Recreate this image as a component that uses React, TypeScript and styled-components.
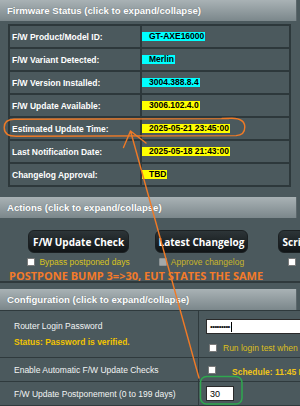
import React from "react";
import styled, { createGlobalStyle } from "styled-components";

const GlobalStyle = createGlobalStyle`
  html, body {
    margin: 0;
    padding: 0;
    background: #4b595d;
  }
  body {
    font-family: "Liberation Sans", Arial, sans-serif;
  }
`;

const STATUS_ROWS = [
  { label: "F/W Product/Model ID:", value: "GT-AXE16000", tone: "cyan" },
  { label: "F/W Variant Detected:", value: "Merlin", tone: "cyan" },
  { label: "F/W Version Installed:", value: "3004.388.8.4", tone: "cyan" },
  { label: "F/W Update Available:", value: "3006.102.4.0", tone: "yellow" },
  { label: "Estimated Update Time:", value: "2025-05-21 23:45:00", tone: "yellow" },
  { label: "Last Notification Date:", value: "2025-05-18 21:43:00", tone: "yellow" },
  { label: "Changelog Approval:", value: "TBD", tone: "yellow" },
];

const App: React.FC = () => {
  return (
    <>
      <GlobalStyle />
      <Page>
        <SectionHeader>Firmware Status (click to expand/collapse)</SectionHeader>
        <StatusGrid>
          {STATUS_ROWS.map((row) => (
            <React.Fragment key={row.label}>
              <StatusLabel>{row.label}</StatusLabel>
              <StatusValueCell>
                <Badge tone={row.tone}>{row.value}</Badge>
              </StatusValueCell>
            </React.Fragment>
          ))}
        </StatusGrid>

        <SectionHeader top={10}>Actions (click to expand/collapse)</SectionHeader>
        <ActionsBody>
          <ButtonsRow>
            <ActionCol width={101} gap={26}>
              <ActionButton>F/W Update Check</ActionButton>
              <CheckRow>
                <CheckBox />
                <CheckText>Bypass postponed days</CheckText>
              </CheckRow>
            </ActionCol>
            <ActionCol width={93} gap={30}>
              <ActionButton>Latest Changelog</ActionButton>
              <CheckRow>
                <CheckBox disabled />
                <CheckText muted>Approve changelog</CheckText>
              </CheckRow>
            </ActionCol>
            <ActionCol width={110} gap={0} start>
              <ActionButton>Script Update Check</ActionButton>
              <CheckRow indent={10}>
                <CheckBox />
                <CheckText green>Auto-update script</CheckText>
              </CheckRow>
            </ActionCol>
          </ButtonsRow>
          <OrangeNote>POSTPONE BUMP 3=&gt;30, EUT STATES THE SAME</OrangeNote>
        </ActionsBody>
        <Divider />

        <SectionHeader top={6}>Configuration (click to expand/collapse)</SectionHeader>
        <ConfigGrid>
          <ConfigLabel height={47}>
            <div>Router Login Password</div>
            <StatusNote>Status: Password is verified.</StatusNote>
          </ConfigLabel>
          <ConfigCell>
            <PasswordBox>
              •••••••••<Caret />
            </PasswordBox>
            <CheckRow indent={3} top={9}>
              <CheckBox />
              <ConfigText>Run login test when saving</ConfigText>
            </CheckRow>
          </ConfigCell>

          <ConfigLabel height={24}>Enable Automatic F/W Update Checks</ConfigLabel>
          <ConfigCell center>
            <CheckRow indent={2} top={0}>
              <CheckBox />
              <ScheduleText>Schedule: 11:45 PM daily</ScheduleText>
            </CheckRow>
          </ConfigCell>

          <ConfigLabel height={24}>F/W Update Postponement (0 to 199 days)</ConfigLabel>
          <ConfigCell center>
            <NumberBox>30</NumberBox>
          </ConfigCell>
        </ConfigGrid>

        <Annotations viewBox="0 0 300 406" width={300} height={406}>
          <path
            d="M 229 118.6 L 14 119.2 C 7 119.4 4.2 122 4.2 127.4 C 4.2 133.2 8 136.2 16 136.2 L 236 135.6 C 242.5 135.4 244.8 132 244.8 127 C 244.8 121.4 241 118.4 232 118.2 L 222 118.4"
            fill="none"
            stroke="#f07a26"
            strokeWidth={1.4}
            strokeLinecap="round"
          />
          <path
            d="M 199 378 L 130.5 131 M 130.5 131 L 123.5 147.5 M 130.5 131 L 146 143"
            fill="none"
            stroke="#f07a26"
            strokeWidth={1.4}
            strokeLinecap="round"
          />
          <rect
            x={200.5}
            y={376.5}
            width={41.5}
            height={27.5}
            rx={6}
            fill="none"
            stroke="#2fa84f"
            strokeWidth={1.5}
          />
        </Annotations>
      </Page>
    </>
  );
};

export default App;

const Page = styled.div`
  position: relative;
  width: 300px;
  height: 406px;
  overflow: hidden;
  background: #4b595d;
`;

const SectionHeader = styled.div<{ top?: number }>`
  box-sizing: border-box;
  width: 297px;
  height: 21px;
  margin-top: ${(props) => props.top ?? 0}px;
  padding-left: 7px;
  display: flex;
  align-items: center;
  background: linear-gradient(#a9b2b5, #7b878b);
  border-right: 1px solid #5b676b;
  color: #fff;
  font-weight: 700;
  font-size: 9.6px;
  white-space: nowrap;
  text-shadow: 0 0 1px rgba(40, 50, 55, 0.5);
`;

const StatusGrid = styled.div`
  display: inline-grid;
  grid-template-columns: 132px 149px;
  margin: 3px 0 0 8px;
  border-top: 2px solid #2d383b;
  border-left: 2px solid #2d383b;
`;

const StatusCell = styled.div`
  box-sizing: border-box;
  height: 23px;
  display: flex;
  align-items: center;
  border-right: 2px solid #2d383b;
  border-bottom: 2px solid #2d383b;
`;

const StatusLabel = styled(StatusCell)`
  padding-left: 2px;
  color: #fff;
  font-weight: 700;
  font-size: 8.5px;
`;

const StatusValueCell = styled(StatusCell)`
  padding-left: 0;
`;

const Badge = styled.span<{ tone: string }>`
  padding: 0 1px 0 7px;
  line-height: 9px;
  background: ${(props) => (props.tone === "cyan" ? "#00ffff" : "#ffff00")};
  color: #000;
  font-weight: 700;
  font-size: 8.5px;
`;

const ActionsBody = styled.div`
  height: 63px;
  box-sizing: border-box;
  padding-top: 12px;
`;

const ButtonsRow = styled.div`
  display: flex;
  padding-left: 28px;
`;

const ActionCol = styled.div<{ width: number; gap: number; start?: boolean }>`
  flex-shrink: 0;
  width: ${(props) => props.width}px;
  margin-right: ${(props) => props.gap}px;
  display: flex;
  flex-direction: column;
  align-items: ${(props) => (props.start ? "flex-start" : "center")};
`;

const ActionButton = styled.button`
  width: 100%;
  height: 23px;
  padding: 0;
  border: 1px solid #1b2022;
  border-radius: 6px;
  background: linear-gradient(#2d3538, #101416);
  color: #fff;
  font-family: "Open Sans", "Liberation Sans", sans-serif;
  font-weight: 700;
  font-size: 10px;
  white-space: nowrap;
`;

const CheckRow = styled.div<{ indent?: number; top?: number }>`
  display: flex;
  align-items: center;
  gap: 4px;
  margin-top: ${(props) => props.top ?? 4}px;
  margin-left: ${(props) => props.indent ?? 0}px;
  white-space: nowrap;
`;

const CheckBox = styled.span<{ disabled?: boolean }>`
  flex-shrink: 0;
  box-sizing: border-box;
  width: 8px;
  height: 8px;
  border: 1px solid ${(props) => (props.disabled ? "#8d9496" : "#7a7a7a")};
  border-radius: 1px;
  background: ${(props) => (props.disabled ? "#a3a9aa" : "#fff")};
`;

const CheckText = styled.span<{ muted?: boolean; green?: boolean }>`
  font-size: 8.5px;
  line-height: 10px;
  color: ${(props) =>
    props.green ? "#5bc43a" : props.muted ? "#c9b62a" : "#d9c41e"};
`;

const OrangeNote = styled.div`
  margin: 3px 0 0 9px;
  font-family: "Open Sans", "Liberation Sans", sans-serif;
  font-weight: 700;
  font-size: 11px;
  line-height: 12px;
  color: #f47b2a;
  white-space: nowrap;
`;

const Divider = styled.div`
  height: 2px;
  background: #2f393c;
`;

const ConfigGrid = styled.div`
  display: grid;
  grid-template-columns: 199px 1fr;
  border-top: 1px solid #2f3a3d;
`;

const ConfigLabel = styled.div<{ height: number }>`
  box-sizing: border-box;
  height: ${(props) => props.height}px;
  padding-left: 14px;
  display: flex;
  flex-direction: column;
  justify-content: center;
  border-right: 1px solid #2f3a3d;
  border-bottom: 1px solid #2f3a3d;
  color: #f2f4f4;
  font-size: 8.5px;
  line-height: 16px;
  white-space: nowrap;
`;

const StatusNote = styled.div`
  color: #f2c400;
  font-weight: 700;
`;

const ConfigCell = styled.div<{ center?: boolean }>`
  box-sizing: border-box;
  padding: ${(props) => (props.center ? "0" : "8px")} 0 0 7px;
  display: flex;
  flex-direction: column;
  justify-content: ${(props) => (props.center ? "center" : "flex-start")};
  border-bottom: 1px solid #2f3a3d;
`;

const PasswordBox = styled.div`
  box-sizing: border-box;
  width: 110px;
  height: 15px;
  padding-left: 3px;
  display: flex;
  align-items: center;
  background: #fff;
  border: 1px solid #2a2a2a;
  color: #111;
  font-size: 8px;
  letter-spacing: -0.6px;
`;

const Caret = styled.span`
  width: 1px;
  height: 10px;
  margin-left: 1px;
  background: #000;
`;

const ConfigText = styled.span`
  margin-left: 2px;
  font-size: 8.5px;
  color: #dcbf1c;
`;

const ScheduleText = styled.span`
  margin-left: 12px;
  margin-top: 4px;
  font-size: 8.5px;
  font-weight: 700;
  color: #f0c419;
`;

const NumberBox = styled.div`
  box-sizing: border-box;
  width: 28px;
  height: 15px;
  padding-left: 3px;
  display: flex;
  align-items: center;
  background: #fff;
  border: 1px solid #2a2a2a;
  color: #000;
  font-size: 9px;
`;

const Annotations = styled.svg`
  position: absolute;
  top: 0;
  left: 0;
  pointer-events: none;
`;
